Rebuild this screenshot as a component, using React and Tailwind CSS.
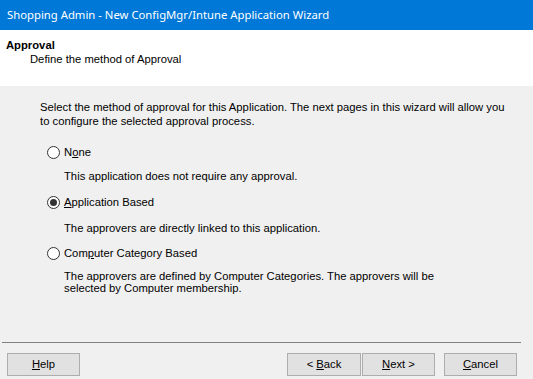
import React from "react";

function Radio({ checked, children }) {
  return (
    <div className="flex items-center h-[14px] pl-[47px]">
      <div className="w-[13px] h-[13px] rounded-full border border-[#333333] bg-white flex items-center justify-center shrink-0">
        {checked && <div className="w-[7px] h-[7px] rounded-full bg-[#333333]" />}
      </div>
      <span className="ml-[4px] leading-[14px]">{children}</span>
    </div>
  );
}

function Btn({ children, className = "" }) {
  return (
    <div
      className={
        "w-[73px] h-[23px] border border-[#adadad] bg-[#e1e1e1] flex items-center justify-center text-[11.25px] leading-[13px] " +
        className
      }
    >
      <span>{children}</span>
    </div>
  );
}

export default function App() {
  return (
    <div
      className="w-[533px] h-[379px] flex flex-col bg-[#f0f0f0] text-black overflow-hidden"
      style={{ fontFamily: '"Liberation Sans", Arial, sans-serif' }}
    >
      <div
        className="h-[30px] bg-[#0078d7] text-white flex items-center pl-[7px] text-[11.3px]"
        style={{ fontFamily: '"Noto Sans", sans-serif' }}
      >
        Shopping Admin - New ConfigMgr/Intune Application Wizard
      </div>
      <div className="h-[56px] bg-white pt-[8px] text-[11.25px]">
        <div className="pl-[6px] font-bold leading-[14px]">Approval</div>
        <div className="pl-[30px] leading-[14px]">Define the method of Approval</div>
      </div>
      <div className="flex-1 text-[11.25px] pt-[14px]">
        <div className="pl-[40px] leading-[14px]">
          Select the method of approval for this Application. The next pages in this wizard will allow you
          <br />
          to configure the selected approval process.
        </div>
        <div className="mt-[17px]">
          <Radio>
            N<u>o</u>ne
          </Radio>
        </div>
        <div className="mt-[10px] pl-[64px] leading-[14px]">
          This application does not require any approval.
        </div>
        <div className="mt-[12px]">
          <Radio checked>
            <u>A</u>pplication Based
          </Radio>
        </div>
        <div className="mt-[12px] pl-[64px] leading-[14px]">
          The approvers are directly linked to this application.
        </div>
        <div className="mt-[11px]">
          <Radio>
            Com<u>p</u>uter Category Based
          </Radio>
        </div>
        <div className="mt-[10px] pl-[64px] leading-[12px]">
          The approvers are defined by Computer Categories. The approvers will be
          <br />
          selected by Computer membership.
        </div>
      </div>
      <div className="ml-[2px] mr-[12px] h-px bg-[#808080]" />
      <div className="flex items-center mt-[10px] mb-[3px] pl-[7px] pr-[16px]">
        <Btn>
          <u>H</u>elp
        </Btn>
        <div className="flex-1" />
        <Btn className="w-[74px]">
          &lt; <u>B</u>ack
        </Btn>
        <Btn className="ml-[1px]">
          <u>N</u>ext &gt;
        </Btn>
        <Btn className="ml-[9px]">
          <u>C</u>ancel
        </Btn>
      </div>
    </div>
  );
}
